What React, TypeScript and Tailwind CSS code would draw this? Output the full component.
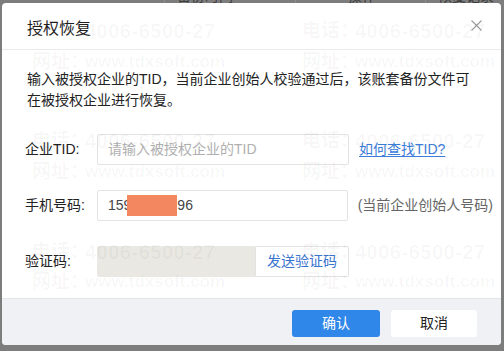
const marks = [
  { top: 19, left: 85, text: "4006-6500-27", phone: true, noLabel: true },
  { top: 19, left: 302, text: "4006-6500-27", phone: true },
  { top: 50, left: 32, text: "www.tdxsoft.com", phone: false },
  { top: 50, left: 302, text: "www.tdxsoft.com", phone: false },
  { top: 129, left: 32, text: "4006-6500-27", phone: true },
  { top: 129, left: 302, text: "4006-6500-27", phone: true },
  { top: 160, left: 32, text: "www.tdxsoft.com", phone: false },
  { top: 160, left: 302, text: "www.tdxsoft.com", phone: false },
  { top: 240, left: 32, text: "4006-6500-27", phone: true },
  { top: 240, left: 302, text: "4006-6500-27", phone: true },
  { top: 270, left: 32, text: "www.tdxsoft.com", phone: false },
  { top: 270, left: 302, text: "www.tdxsoft.com", phone: false },
];

function Watermarks() {
  return (
    <div className="pointer-events-none absolute inset-0 font-['Liberation_Sans','Noto_Sans_CJK_SC',sans-serif] font-bold text-[rgba(0,0,0,0.035)]">
      {marks.map((m, i) => (
        <div
          key={i}
          className="absolute flex items-center whitespace-nowrap leading-[24px]"
          style={{ top: m.top, left: m.left }}
        >
          {!m.noLabel && (
            <span className="inline-block w-[53px] text-[19px]">
              {m.phone ? "电话：" : "网址："}
            </span>
          )}
          {m.phone ? (
            <span className="text-[20px] tracking-[0.5px]">{m.text}</span>
          ) : (
            <span className="text-[17px]">{m.text}</span>
          )}
        </div>
      ))}
    </div>
  );
}

function Field({ label, children, extra }: { label: string; children: React.ReactNode; extra?: React.ReactNode }) {
  return (
    <div className="flex items-center h-[31px]">
      <div className="w-[72px] shrink-0 text-[14px] text-[#222]">{label}</div>
      {children}
      {extra && <div className="ml-[10px] text-[14px] whitespace-nowrap">{extra}</div>}
    </div>
  );
}

export default function App() {
  return (
    <div className="w-[504px] h-[351px] bg-[#7d7d7d] overflow-hidden relative font-['Liberation_Sans','Noto_Sans_CJK_SC',sans-serif]">
      {/* page behind the mask, only its bottom edge shows */}
      <div className="h-[3px] overflow-hidden flex text-[14px] leading-[14px] text-[#3c3c3c]">
        <div className="w-[165px] h-[14px] -mt-[11px] border-r border-[#8c8c8c]" />
        <div className="w-[130px] h-[14px] -mt-[11px] pl-[12px]">备份时间</div>
        <div className="w-[130px] h-[14px] -mt-[11px] border-l border-[#8c8c8c] pl-[52px]">操作</div>
        <div className="h-[14px] -mt-[11px] border-l border-[#8c8c8c] pl-[12px]">恢复记录</div>
      </div>

      <div className="ml-[2px] w-[499px] h-[342px] bg-white rounded-[4px] overflow-hidden flex flex-col">
        <div className="h-[47px] shrink-0 border-b border-[#e8eaec] flex items-center justify-between pl-[25px] pr-[19px] pt-[6px]">
          <span className="text-[16px] text-[#1f1f1f]">授权恢复</span>
          <svg width="11" height="11" viewBox="0 0 11 11" className="-mt-[7px]">
            <path d="M0.5 0.5 L10.5 10.5 M10.5 0.5 L0.5 10.5" stroke="#9a9a9a" strokeWidth="1.1" />
          </svg>
        </div>

        <div className="flex-1 pl-[23px] pr-[8px] pt-[19px]">
          <p className="text-[14px] leading-[21px] text-[#222] pl-[2px]">
            输入被授权企业的TID，当前企业创始人校验通过后，该账套备份文件可
            <br />
            在被授权企业进行恢复。
          </p>

          <div className="mt-[23px] flex flex-col gap-[25px]">
            <Field
              label="企业TID:"
              extra={<a className="text-[#3b7dd8] underline underline-offset-2 cursor-pointer">如何查找TID?</a>}
            >
              <div className="w-[252px] h-[31px] border border-[#e3e3e3] rounded-[2px] flex items-center pl-[10px] text-[14px] text-[#b0b0b0]">
                请输入被授权企业的TID
              </div>
            </Field>

            <Field label="手机号码:" extra={<span className="text-[#666]">(当前企业创始人号码)</span>}>
              <div className="w-[252px] h-[31px] border border-[#e3e3e3] rounded-[2px] flex items-center pl-[10px] text-[14px] text-[#444]">
                <span>159</span>
                <span className="inline-block w-[50px] h-[21px] bg-[#f3875f] -ml-[4px]" />
                <span>96</span>
              </div>
            </Field>

            <Field label="验证码:">
              <div className="flex h-[31px]">
                <div className="w-[158px] h-[31px] bg-[#e9e8e3] rounded-l-[2px]" />
                <div className="w-[94px] h-[31px] border border-[#e3e3e3] rounded-r-[2px] flex items-center justify-center text-[14px] text-[#3b74d0]">
                  发送验证码
                </div>
              </div>
            </Field>
          </div>
        </div>

        <div className="h-[47px] shrink-0 border-t border-[#e3e5e8] bg-[#f0f1f5] flex justify-end items-start gap-[11px] pr-[24px] pt-[11px]">
          <button className="w-[88px] h-[27px] rounded-[3px] bg-[#2f87e9] text-white text-[14px]">确认</button>
          <button className="w-[86px] h-[27px] rounded-[3px] bg-white text-[#222] text-[14px]">取消</button>
        </div>
      </div>

      <Watermarks />
    </div>
  );
}
